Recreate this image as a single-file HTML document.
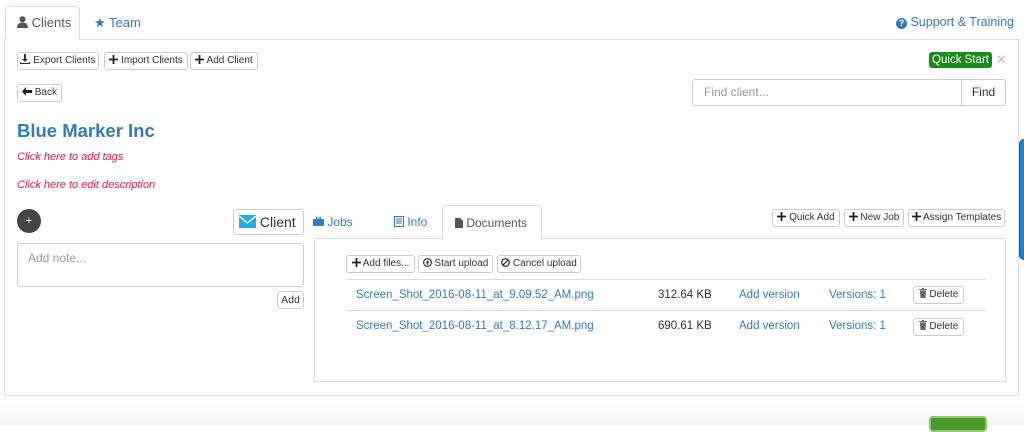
<!DOCTYPE html>
<html><head><meta charset="utf-8"><style>
*{box-sizing:border-box;margin:0;padding:0}
body{width:1024px;height:426px;overflow:hidden;background:#fff;font-family:"Liberation Sans",Arial,sans-serif;font-size:12px;color:#333;position:relative}
.a{position:absolute}
.btn{position:absolute;border:1px solid #ccc;border-radius:3px;background:#fff;font-size:10px;color:#333;height:18px;line-height:16px;padding:0;text-align:center;white-space:nowrap;overflow:hidden}
.btn svg{vertical-align:-1px}
.link{color:#337ab7}
.b{font-weight:bold}
</style></head><body>
<div class="a" style="left:4px;top:39px;width:1015px;height:357px;border:1px solid #ddd;border-radius:0 0 2px 2px"></div>
<div class="a" style="left:5px;top:6px;width:75px;height:34px;border:1px solid #ddd;border-bottom:none;border-radius:4px 4px 0 0;background:#fff"></div>
<div class="a" style="left:17px;top:15px;font-size:13px;color:#555"><svg width="11" height="12" viewBox="0 0 10 11" style="vertical-align:-1px"><circle cx="5" cy="3" r="2.8" fill="#555"/><path d="M0 11 Q0 6 5 6 Q10 6 10 11Z" fill="#555"/></svg> Clients</div>
<div class="a link" style="left:94px;top:15px;font-size:13px">★ Team</div>
<div class="a link" style="left:896px;top:15px;font-size:12.5px"><span style="display:inline-block;width:11px;height:11px;border-radius:50%;background:#337ab7;color:#fff;font-size:9px;line-height:11px;text-align:center;font-weight:bold">?</span> Support &amp; Training</div>

<svg width="0" height="0" style="position:absolute"><defs>
<symbol id="plus" viewBox="0 0 10 10"><path d="M4 0h2v4h4v2H6v4H4V6H0V4h4z" fill="#222"/></symbol>
</defs></svg>

<div class="btn" style="left:17px;top:52px;width:82px"><svg width="10" height="10" viewBox="0 0 10 10"><path d="M4 0h2v5h2L5 8 2 5h2z M0 8h1v1h8V8h1v2H0z" fill="#333"/></svg> Export Clients</div>
<div class="btn" style="left:104px;top:52px;width:84px"><svg width="9" height="9"><use href="#plus"/></svg> Import Clients</div>
<div class="btn" style="left:190px;top:52px;width:68px"><svg width="9" height="9"><use href="#plus"/></svg> Add Client</div>
<div class="btn" style="left:17px;top:84px;width:45px"><svg width="10" height="9" viewBox="0 0 10 9"><path d="M0 4.5L4 0v3h6v3H4v3z" fill="#222"/></svg> Back</div>

<div class="a" style="left:929px;top:52px;width:63px;background:#1a8a1a;color:#fff;font-size:11.5px;border-radius:3px;text-align:center;height:16px;line-height:16px">Quick Start</div>
<div class="a" style="left:996px;top:52px;color:#bbb;font-size:13px">✕</div>

<div class="a" style="left:692px;top:79px;width:270px;height:27px;border:1px solid #ccc;border-radius:3px 0 0 3px;color:#999;font-size:12px;line-height:25px;padding-left:11px">Find client...</div>
<div class="a" style="left:961px;top:79px;width:45px;height:27px;border:1px solid #ccc;border-radius:0 3px 3px 0;background:#fff;font-size:12px;line-height:25px;text-align:center">Find</div>

<div class="a b" style="left:17px;top:120px;font-size:18.5px;color:#337ab7">Blue Marker Inc</div>
<div class="a" style="left:17px;top:151px;font-size:11px;font-style:italic;color:#e8174f">Click here to add tags</div>
<div class="a" style="left:17px;top:179px;font-size:11px;font-style:italic;color:#e8174f">Click here to edit description</div>

<div class="a" style="left:17px;top:209px;width:24px;height:24px;border-radius:50%;background:#444;color:#fff;text-align:center;line-height:24px;font-size:11px">+</div>
<div class="a" style="left:233px;top:209px;width:71px;height:26px;border:1px solid #ccc;border-radius:3px;font-size:14px;line-height:24px;padding-left:5px"><svg width="17" height="13" viewBox="0 0 17 13" style="vertical-align:-1px"><rect width="17" height="13" fill="#29aae1"/><path d="M0 1 L8.5 8 L17 1" stroke="#fff" stroke-width="1.4" fill="none"/></svg> Client</div>
<div class="a" style="left:17px;top:243px;width:287px;height:44px;border:1px solid #ccc;border-radius:3px;color:#999;font-size:12px;padding:7px 10px">Add note...</div>
<div class="btn" style="left:277px;top:291px;width:27px;font-size:10.5px">Add</div>

<div class="a link" style="left:313px;top:215px;font-size:12px"><svg width="11" height="9" viewBox="0 0 11 9" style="vertical-align:0"><rect x="3.5" y="0" width="4" height="2" fill="none" stroke="#337ab7"/><rect x="0" y="2" width="11" height="7" rx="1" fill="#337ab7"/></svg> Jobs</div>
<div class="a link" style="left:394px;top:215px;font-size:12px"><svg width="10" height="11" viewBox="0 0 10 11" style="vertical-align:-1px"><rect x=".5" y=".5" width="9" height="10" fill="none" stroke="#337ab7"/><path d="M2 3h6M2 5h6M2 7h6" stroke="#337ab7"/></svg> Info</div>
<div class="a" style="left:442px;top:205px;width:100px;height:35px;border:1px solid #ddd;border-bottom:none;border-radius:4px 4px 0 0;background:#fff;z-index:2;font-size:12px;color:#555;padding:10px 0 0 12px"><svg width="8" height="10" viewBox="0 0 8 10" style="vertical-align:-1px"><path d="M0 0h5l3 3v7H0z" fill="#555"/></svg> Documents</div>
<div class="a" style="left:314px;top:238px;width:692px;height:144px;border:1px solid #ddd"></div>
<div class="btn" style="left:772px;top:209px;width:68px"><svg width="9" height="9"><use href="#plus"/></svg> Quick Add</div>
<div class="btn" style="left:844px;top:209px;width:60px"><svg width="9" height="9"><use href="#plus"/></svg> New Job</div>
<div class="btn" style="left:908px;top:209px;width:97px"><svg width="9" height="9"><use href="#plus"/></svg> Assign Templates</div>

<div class="btn" style="left:346px;top:255px;width:69px"><svg width="9" height="9"><use href="#plus"/></svg> Add files...</div>
<div class="btn" style="left:418px;top:255px;width:75px"><svg width="9" height="9" viewBox="0 0 10 10"><circle cx="5" cy="5" r="4.3" fill="none" stroke="#333" stroke-width="1.3"/><path d="M5 2.5L7 5H5.8v2.5H4.2V5H3z" fill="#333"/></svg> Start upload</div>
<div class="btn" style="left:497px;top:255px;width:84px"><svg width="9" height="9" viewBox="0 0 10 10"><circle cx="5" cy="5" r="4.2" fill="none" stroke="#333" stroke-width="1.4"/><path d="M2 8L8 2" stroke="#333" stroke-width="1.4"/></svg> Cancel upload</div>
<div class="a" style="left:346px;top:279px;width:640px;border-top:1px solid #ddd"></div>
<div class="a" style="left:346px;top:310px;width:640px;border-top:1px solid #ddd"></div>

<div class="a link" style="left:356px;top:289px;font-size:11.5px">Screen_Shot_2016-08-11_at_9.09.52_AM.png</div>
<div class="a" style="left:658px;top:289px;font-size:11.5px">312.64 KB</div>
<div class="a link" style="left:739px;top:289px;font-size:11.5px">Add version</div>
<div class="a link" style="left:829px;top:289px;font-size:11.5px">Versions: 1</div>
<div class="btn" style="left:913px;top:286px;width:51px"><svg width="8" height="10" viewBox="0 0 8 10"><path d="M0 1h8v1H0zM3 0h2v1H3zM1 2.5h6L6.5 10h-5z" fill="#666"/></svg> Delete</div>

<div class="a link" style="left:356px;top:320px;font-size:11.5px">Screen_Shot_2016-08-11_at_8.12.17_AM.png</div>
<div class="a" style="left:658px;top:320px;font-size:11.5px">690.61 KB</div>
<div class="a link" style="left:739px;top:320px;font-size:11.5px">Add version</div>
<div class="a link" style="left:829px;top:320px;font-size:11.5px">Versions: 1</div>
<div class="btn" style="left:913px;top:318px;width:51px"><svg width="8" height="10" viewBox="0 0 8 10"><path d="M0 1h8v1H0zM3 0h2v1H3zM1 2.5h6L6.5 10h-5z" fill="#666"/></svg> Delete</div>

<div class="a" style="left:1019px;top:139px;width:10px;height:121px;background:#1a82d1;border:1px solid #0f5fa0;border-radius:5px 0 0 5px"></div>
<div class="a" style="left:0;top:400px;width:1024px;height:26px;background:linear-gradient(#fff,#f6f6f6)"></div>
<div class="a" style="left:929px;top:416px;width:58px;height:16px;background:#4a9a2a;border:2px solid #8cc870;border-radius:4px"></div>
</body></html>
